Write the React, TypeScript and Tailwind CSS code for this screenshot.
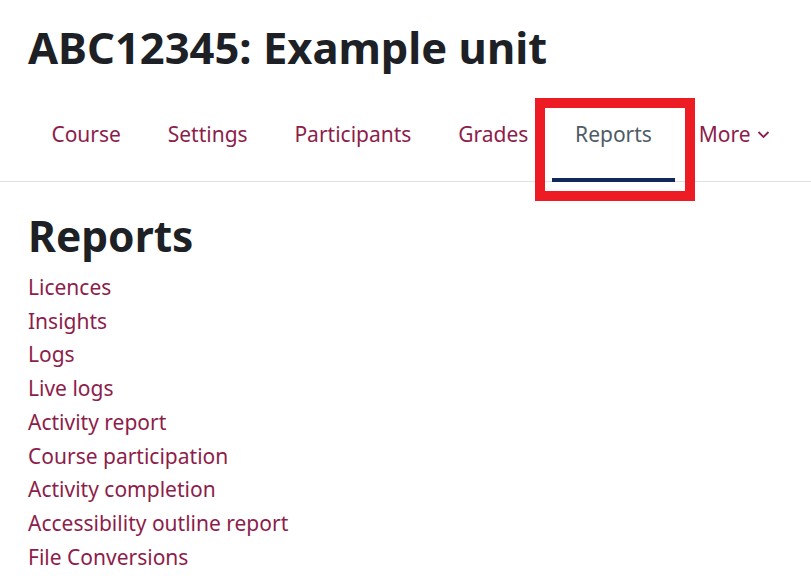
const navItems = ['Course', 'Settings', 'Participants', 'Grades', 'Reports'];

const reportLinks = [
  'Licences',
  'Insights',
  'Logs',
  'Live logs',
  'Activity report',
  'Course participation',
  'Activity completion',
  'Accessibility outline report',
  'File Conversions',
];

export default function App() {
  return (
    <div className="min-h-[585px] bg-white font-['Noto_Sans','Open_Sans',sans-serif] text-[#1d2125]">
      <div className="px-[28px] pt-[20px]">
        <h1 className="text-[43.5px] font-bold leading-[54px]">ABC12345: Example unit</h1>
      </div>

      <nav className="mt-[27px] flex border-b border-[#dee2e6] pl-[28px]">
        {navItems.map((item) => {
          const active = item === 'Reports';
          return (
            <div key={item} className="relative px-[23.4px] pb-[29.5px] pt-[16.5px]">
              <a
                className={
                  'block text-[21px] leading-[33.75px] ' +
                  (active ? 'text-[#4f5b66]' : 'text-[#8d1d4b]')
                }
              >
                {item}
              </a>
              {active && (
                <>
                  <span className="absolute bottom-[-1px] left-0 right-0 h-[4px] bg-[#0f2a5a]" />
                  <span className="pointer-events-none absolute -bottom-[20px] -left-[17px] -right-[20px] top-[-3px] border-[10px] border-[#ed1c24]" />
                </>
              )}
            </div>
          );
        })}
        <div className="px-[23.4px] pb-[29.5px] pt-[16.5px]">
          <a className="flex items-center gap-[6px] text-[21px] leading-[33.75px] text-[#8d1d4b]">
            More
            <svg width="13" height="9" viewBox="0 0 13 9" fill="none">
              <path d="M1.5 2l5 5 5-5" stroke="currentColor" strokeWidth="1.8" />
            </svg>
          </a>
        </div>
      </nav>

      <div className="px-[28px] pt-[27px]">
        <h2 className="text-[42.5px] font-bold leading-[54px]">Reports</h2>
        <ul className="mt-[8px]">
          {reportLinks.map((link) => (
            <li key={link} className="text-[21px] leading-[33.75px]">
              <a className="text-[#8d1d4b]">{link}</a>
            </li>
          ))}
        </ul>
      </div>
    </div>
  );
}
